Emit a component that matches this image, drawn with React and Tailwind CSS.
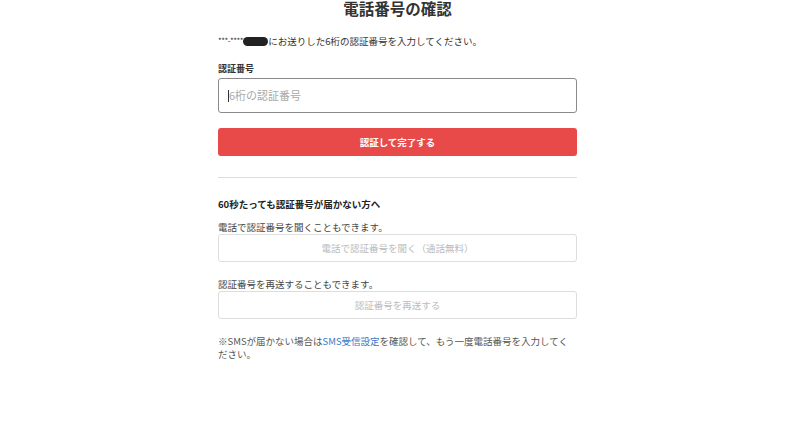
export default function App() {
	return (
		<div
			className="min-h-[428px] w-full bg-white text-[#333]"
			style={{ fontFamily: '"Noto Sans CJK JP", "Noto Sans", sans-serif' }}
		>
			<div className="ml-[218px] w-[359px]">
				<h1 className="-mt-[3px] text-center text-[15.5px] font-bold leading-[22px] text-[#333]">
					電話番号の確認
				</h1>

				<p className="mt-[15px] flex items-center text-[9.5px] leading-[14px] text-[#333]">
					<span className="text-[8px] tracking-[-0.5px]">***-****-</span>
					<span className="-ml-[2px] inline-block h-[9px] w-[25px] rounded-full bg-[#222]" />
					にお送りした6桁の認証番号を入力してください。
				</p>

				<label className="mt-[15px] block text-[9px] font-bold leading-[12px] text-[#333]">
					認証番号
				</label>
				<div className="mt-[3px] flex h-[35px] items-center rounded-[3px] border border-[#8a8a8a] px-[9px]">
					<span className="h-[12px] w-px bg-[#333]" />
					<span className="text-[11px] text-[#aaa]">6桁の認証番号</span>
				</div>

				<button className="mt-[15px] flex h-[28px] w-full items-center justify-center rounded-[3px] bg-[#e84a4a] text-[9.5px] font-bold text-white">
					認証して完了する
				</button>

				<div className="mt-[21px] h-px w-full bg-[#ddd]" />

				<h2 className="mt-[19px] text-[9.5px] font-bold leading-[14px] text-[#222]">
					60秒たっても認証番号が届かない方へ
				</h2>

				<p className="mt-[9px] text-[9.5px] leading-[14px] text-[#444]">
					電話で認証番号を聞くこともできます。
				</p>
				<button className="flex h-[28px] w-full items-center justify-center rounded-[3px] border border-[#ddd] text-[9.5px] text-[#bbb]">
					電話で認証番号を聞く（通話無料）
				</button>

				<p className="mt-[15px] text-[9.5px] leading-[14px] text-[#444]">
					認証番号を再送することもできます。
				</p>
				<button className="flex h-[28px] w-full items-center justify-center rounded-[3px] border border-[#ddd] text-[9.5px] text-[#bbb]">
					認証番号を再送する
				</button>

				<p className="mt-[16px] text-[9.5px] leading-[13px] text-[#555]">
					※SMSが届かない場合は
					<span className="text-[#3b78c4]">SMS受信設定</span>
					を確認して、もう一度電話番号を入力してください。
				</p>
			</div>
		</div>
	);
}
